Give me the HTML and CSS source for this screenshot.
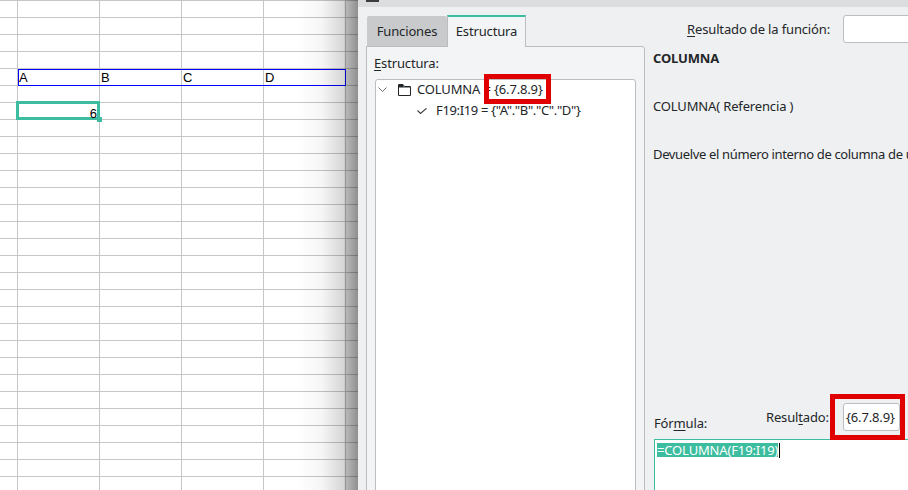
FILE: index.html
```html
<!DOCTYPE html>
<html lang="es">
<head>
<meta charset="utf-8">
<title>Asistente de funciones</title>
<link rel="stylesheet" href="styles.css">
</head>
<body>
<div class="sheet">
  <div class="cells">
    <div class="rowsel">
      <span>A</span><span>B</span><span>C</span><span>D</span>
    </div>
    <div class="cursor-cell">6<span class="handle"></span></div>
  </div>
  <div class="shade"></div>
</div>
<div class="dialog">
  <div class="titlebar"><span class="ticon"></span></div>
  <div class="dbody">
    <div class="leftcol">
      <div class="tabs">
        <div class="tab">Funciones</div>
        <div class="tab active">Estructura</div>
      </div>
      <div class="panel">
        <div class="lbl"><u>E</u>structura:</div>
        <div class="tree">
          <div class="trow">
            <svg class="chev" width="9" height="5" viewBox="0 0 9 5"><path d="M0.5 0.5 L4.5 4.5 L8.5 0.5" fill="none" stroke="#6e7072" stroke-width="1"/></svg>
            <svg class="folder" width="13" height="12" viewBox="0 0 13 12"><path d="M0.5 0.5 H5 L6.5 2.5 H12.5 V11.5 H0.5 Z" fill="none" stroke="#232629" stroke-width="1"/><path d="M0.5 1 H5 L6 3 H12.5 V3.5 H0.5 Z" fill="#232629"/></svg>
            <span class="ttext">COLUMNA = <span class="mark">{6.7.8.9}</span></span>
          </div>
          <div class="trow">
            <svg class="check" width="10" height="6" viewBox="0 0 10 6"><path d="M0.5 2.5 L3.5 5.5 L9.5 0.3" fill="none" stroke="#3b3e41" stroke-width="1.1"/></svg>
            <span class="ttext tight">F19:I19 = {"A"."B"."C"."D"}</span>
          </div>
        </div>
      </div>
    </div>
    <div class="rightcol">
      <div class="fnres">
        <span class="fnres-label"><u>R</u>esultado de la función:</span>
        <span class="input"></span>
      </div>
      <div class="fname">COLUMNA</div>
      <div class="syntax">COLUMNA( Referencia )</div>
      <div class="desc">Devuelve el número interno de columna de una referencia.</div>
      <div class="bottomrow">
        <span class="flabel">Fór<u>m</u>ula:</span>
        <span class="rlabel">Resul<u>t</u>ado:</span>
        <span class="resbox">{6.7.8.9}</span>
      </div>
      <div class="formula"><span class="sel">=COLUMNA(F19:I19)</span><span class="caret"></span></div>
    </div>
  </div>
</div>
</body>
</html>
```

FILE: styles.css
```css
html, body {
  margin: 0;
  padding: 0;
}
body {
  width: 908px;
  height: 490px;
  overflow: hidden;
  display: flex;
  background: #ffffff;
}

/* ---------- spreadsheet ---------- */
.sheet {
  position: relative;
  width: 358px;
  height: 490px;
  flex-shrink: 0;
  overflow: hidden;
  background-color: #ffffff;
  background-image:
    linear-gradient(to bottom, #c6c6c6 1px, transparent 1px),
    linear-gradient(to right, #c6c6c6 1px, transparent 1px);
  background-size: 100% 17px, 82px 100%;
  background-position: 0 0, 17px 0;
  font-family: "Liberation Sans", Arial, sans-serif;
  font-size: 13px;
  color: #000;
}
.cells {
  display: grid;
  grid-template-columns: 18px repeat(4, 82px) 12px;
  grid-template-rows: repeat(7, 17px);
  margin-top: 1px;
}
.rowsel {
  grid-row: 5;
  grid-column: 2 / 6;
  box-sizing: border-box;
  border: 1px solid #0000ff;
  display: grid;
  grid-template-columns: repeat(4, 82px);
  line-height: 15px;
}
.cursor-cell {
  grid-row: 7;
  grid-column: 2;
  margin: -2px 0 0 -2px;
  box-sizing: border-box;
  border: 3px solid #3dbda0;
  position: relative;
  text-align: right;
  line-height: 13px;
  padding-top: 3px;
}
.handle {
  position: absolute;
  right: -5px;
  bottom: -5px;
  width: 5px;
  height: 5px;
  background: #3dbda0;
}
.shade {
  position: absolute;
  top: 0;
  right: 0;
  bottom: 0;
  width: 60px;
  background: linear-gradient(to right,
    rgba(0,0,0,0) 0%,
    rgba(0,0,0,0.04) 40%,
    rgba(0,0,0,0.16) 76%,
    rgba(0,0,0,0.28) 80%,
    rgba(0,0,0,0.44) 100%);
}

/* ---------- dialog ---------- */
.dialog {
  width: 550px;
  height: 490px;
  flex-shrink: 0;
  overflow: hidden;
  background: #eff0f1;
  font-family: "Noto Sans", "Open Sans", sans-serif;
  font-size: 13px;
  line-height: 18px;
  letter-spacing: -0.15px;
  color: #232629;
}
.titlebar {
  height: 7px;
  background: #dcddde;
  display: flex;
}
.ticon {
  display: block;
  margin-left: 8px;
  width: 13px;
  height: 2px;
  background: #3a3c3e;
}
.dbody {
  display: flex;
}
.leftcol {
  margin-left: 8px;
  width: 279px;
  flex-shrink: 0;
}
.tabs {
  display: flex;
  align-items: flex-end;
  margin-top: 8px;
  padding-left: 1px;
}
.tab {
  box-sizing: border-box;
  height: 30px;
  width: 80px;
  padding-top: 6px;
  text-align: center;
  background: #c9cacb;
  border-radius: 2px 2px 0 0;
}
.tab.active {
  position: relative;
  z-index: 1;
  width: 79px;
  height: 32px;
  margin-bottom: -1px;
  padding-top: 5px;
  background: #f3f4f5;
  border-top: 2px solid #3dbda0;
  border-left: 1px solid #bcbdbe;
  border-right: 1px solid #bcbdbe;
  border-radius: 0;
}
.panel {
  box-sizing: border-box;
  height: 460px;
  border: 1px solid #bcbdbe;
  border-radius: 0 3px 0 0;
  background: #f3f4f5;
  padding: 7px 8px 0 8px;
}
.lbl {
  margin-left: -1px;
}
.lbl u, .fnres-label u, .flabel u, .rlabel u {
  text-decoration: underline;
  text-underline-offset: 2px;
}
.tree {
  margin-top: 7px;
  box-sizing: border-box;
  width: 261px;
  height: 420px;
  background: #ffffff;
  border: 1px solid #bcbdbe;
  border-radius: 3px 3px 0 0;
}
.trow {
  display: flex;
  align-items: flex-start;
  height: 21px;
  line-height: 19px;
  white-space: nowrap;
}
.chev {
  display: block;
  margin: 7px 0 0 2px;
}
.folder {
  display: block;
  margin: 4px 0 0 11px;
}
.trow .ttext {
  margin-left: 6px;
}
.check {
  display: block;
  margin: 7px 0 0 41px;
}
.check + .ttext {
  margin-left: 9px;
}
.tight {
  letter-spacing: -0.35px;
}
.mark {
  position: relative;
}
.mark::after {
  content: "";
  position: absolute;
  left: -10px;
  right: -8px;
  top: -6px;
  bottom: -6px;
  border: 5px solid #e00000;
}

/* right column */
.rightcol {
  margin-left: 8px;
  width: 400px;
  flex-shrink: 0;
}
.fnres {
  display: flex;
  align-items: center;
  margin-top: 8px;
}
.fnres-label {
  width: 177px;
  text-align: right;
  white-space: nowrap;
}
.input {
  display: block;
  margin-left: 13px;
  box-sizing: border-box;
  width: 150px;
  height: 28px;
  background: #ffffff;
  border: 1px solid #bcbdbe;
  border-radius: 3px;
}
.fname {
  margin-top: 6px;
  font-weight: bold;
}
.syntax {
  margin-top: 30px;
}
.desc {
  margin-top: 30px;
  white-space: nowrap;
  letter-spacing: -0.35px;
}
.bottomrow {
  margin-top: 240px;
  display: flex;
  align-items: flex-end;
  height: 28px;
}
.flabel {
  width: 112px;
  margin-left: 1px;
  margin-bottom: -1px;
}
.rlabel {
  align-self: center;
  width: 77px;
  white-space: nowrap;
}
.resbox {
  position: relative;
  box-sizing: border-box;
  width: 57px;
  height: 28px;
  padding-left: 2px;
  line-height: 26px;
  background: #ffffff;
  border: 1px solid #bcbdbe;
  border-radius: 3px;
  white-space: nowrap;
}
.resbox::after {
  content: "";
  position: absolute;
  left: -14px;
  right: -6px;
  top: -10px;
  bottom: -10px;
  border: 5px solid #e00000;
}
.formula {
  margin-top: 8px;
  margin-left: 1px;
  box-sizing: border-box;
  width: 300px;
  height: 80px;
  background: #ffffff;
  border: 1px solid #3dbda0;
  padding: 3px 2px;
  white-space: nowrap;
}
.sel {
  display: inline-block;
  vertical-align: top;
  height: 14px;
  line-height: 14px;
  background: #3dbda0;
  color: #ffffff;
}
.caret {
  display: inline-block;
  vertical-align: top;
  width: 1px;
  height: 15px;
  margin-left: 1px;
  background: #000;
}
```
